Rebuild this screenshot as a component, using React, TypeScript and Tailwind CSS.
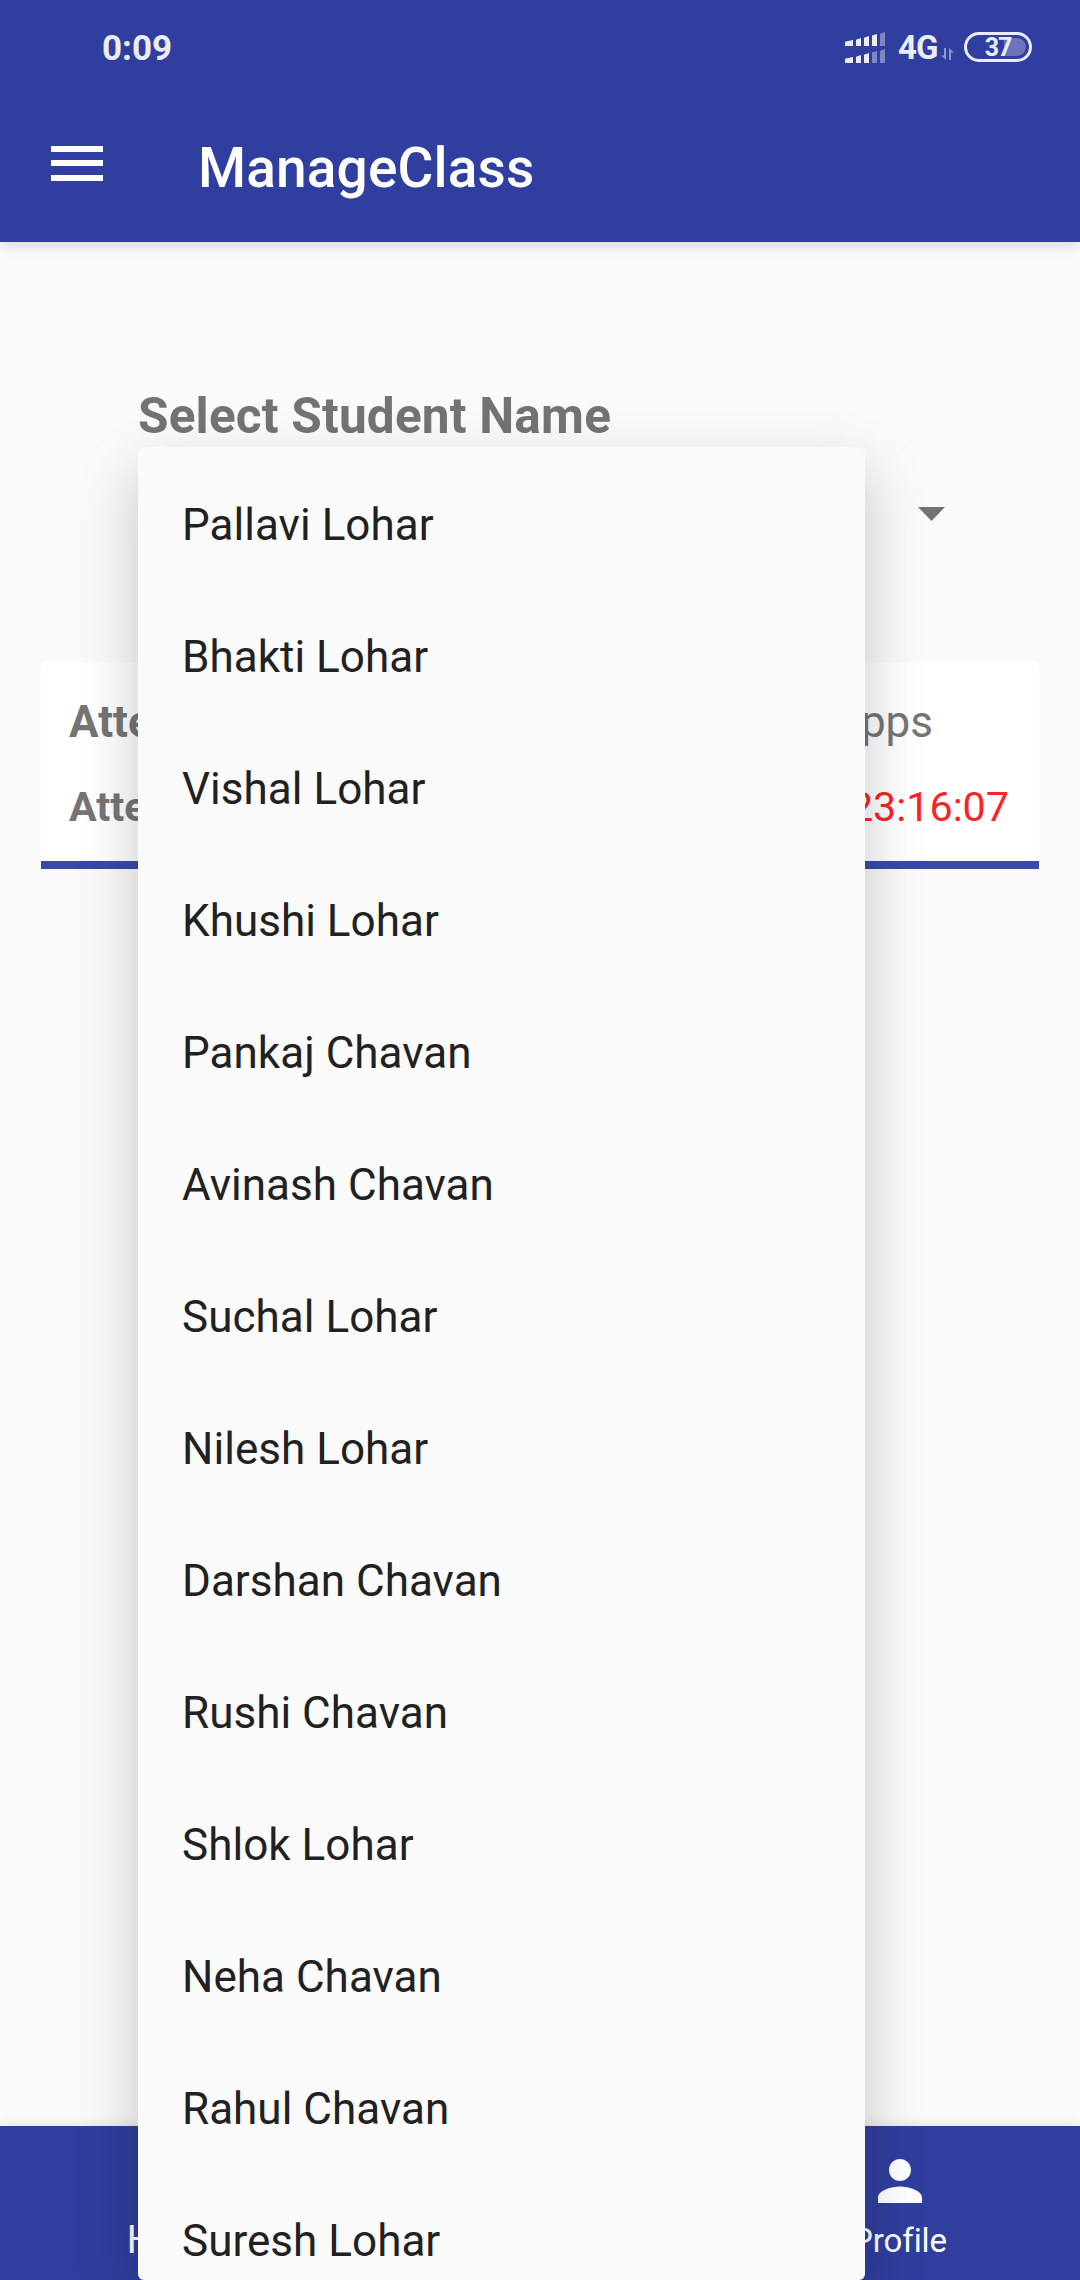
import { MdPerson, MdHome, MdAssignment } from "react-icons/md";

const students = [
  "Pallavi Lohar",
  "Bhakti Lohar",
  "Vishal Lohar",
  "Khushi Lohar",
  "Pankaj Chavan",
  "Avinash Chavan",
  "Suchal Lohar",
  "Nilesh Lohar",
  "Darshan Chavan",
  "Rushi Chavan",
  "Shlok Lohar",
  "Neha Chavan",
  "Rahul Chavan",
  "Suresh Lohar",
];

function SignalBars() {
  return (
    <svg className="h-[31px] w-[40px]" viewBox="0 0 40 31" fill="#ebecf7">
      <path d="M0 10.5 Q0 9.8 .8 9.6 L8 8 V14 H0Z" />
      <path d="M11 7.8 L16 6 V14 H11Z" />
      <path d="M19 5.8 L24 4 V14 H19Z" />
      <path d="M27 3.6 L32 2 V14 H27Z" />
      <path d="M35 2 L40 0 V14 H35Z" opacity=".42" />
      <path d="M0 27.5 Q0 26.8 .8 26.6 L8 25 V31 H0Z" />
      <path d="M11 24.8 L16 23 V31 H11Z" />
      <path d="M19 22.8 L24 21 V31 H19Z" />
      <path d="M27 20.6 L32 19 V31 H27Z" opacity=".42" />
      <path d="M35 19 L40 17 V31 H35Z" opacity=".42" />
    </svg>
  );
}

function StatusBar() {
  return (
    <div className="flex h-[94px] items-center justify-between pr-[48px] pl-[102px] text-[#ebecf7]">
      <span className="pt-[3px] text-[35px] leading-[41px] font-bold">0:09</span>
      <div className="flex items-center">
        <SignalBars />
        <span className="ml-[13px] w-[40px] pt-[2px] text-[33px] leading-[38px] font-bold tracking-[-0.9px]">4G</span>
        <svg className="mt-[14px] ml-[3px] h-[12px] w-[13px]" viewBox="0 0 13 12" fill="#8f96cb">
          <path d="M3 0H5V12L0 7.5H3Z" />
          <path d="M8 12H10V4.5H13L8 0Z" />
        </svg>
        <div className="relative ml-[10px] flex h-[30px] w-[68px] items-center justify-center rounded-full border-[3px] border-[#ebecf7]">
          <div className="absolute top-[3px] right-[3px] h-[18px] w-[22px] rounded-r-full bg-[#6b74ba]" />
          <span className="relative pt-[1px] text-[25px] leading-[24px] font-bold tracking-[-1px]">37</span>
        </div>
      </div>
    </div>
  );
}

function StudentMenu() {
  return (
    <ul className="absolute top-[447px] left-[138px] h-[1833px] w-[727px] rounded-[6px] bg-[#fafafa] pt-[12px] shadow-[0_24px_60px_rgba(0,0,0,0.22)]">
      {students.slice(0, 13).map((name) => (
        <li key={name} className="flex h-[132px] items-center px-[44px] text-[44px] leading-[52px] tracking-[0.03px] text-[#212121]">
          {name}
        </li>
      ))}
      <li className="flex h-[105px] items-start px-[44px] pt-[40px] text-[44px] leading-[52px] tracking-[0.03px] text-[#212121]">
        {students[13]}
      </li>
    </ul>
  );
}

export default function App() {
  return (
    <div className="relative flex h-[2280px] w-[1080px] flex-col overflow-hidden bg-[#fafafa] font-[Roboto,sans-serif]">
      <header className="h-[242px] shrink-0 bg-[#303f9f] shadow-[0_4px_12px_rgba(0,0,0,0.13)]">
        <StatusBar />
        <div className="flex h-[148px] items-center pl-[51px]">
          <div className="mb-[10px] flex w-[52px] flex-col gap-[8.5px]">
            <div className="h-[6px] bg-white" />
            <div className="h-[6px] bg-white" />
            <div className="h-[6px] bg-white" />
          </div>
          <h1 className="ml-[95px] text-[55px] leading-[64px] font-medium tracking-[0.15px] text-white">ManageClass</h1>
        </div>
      </header>

      <main className="flex flex-1 flex-col">
        <h2 className="mt-[145px] ml-[138px] text-[49.5px] leading-[58px] font-bold tracking-[0.2px] text-[#737373]">
          Select Student Name
        </h2>
        <div className="mt-[62px] mr-[135.5px] flex h-[14px] justify-end">
          <svg className="h-[14px] w-[27px]" viewBox="0 0 27 14" fill="#737373">
            <path d="M0 0H27L13.5 14Z" />
          </svg>
        </div>
        <section className="mx-[41px] mt-[141px] border-b-[8px] border-[#3949ab]">
          <div className="flex h-[199px] flex-col rounded-[6px] bg-white pt-[34px] pl-[28px]">
            <div className="flex justify-between pr-[106px] text-[44px] leading-[52px] text-[#757575]">
              <span className="font-bold">Atte</span>
              <span>Apps</span>
            </div>
            <div className="mt-[35px] flex justify-between pr-[30px] text-[41.25px] leading-[48px]">
              <span className="font-bold text-[#757575]">Atte</span>
              <span className="text-[#fb2323]">23:16:07</span>
            </div>
          </div>
        </section>
      </main>

      <nav className="grid h-[154px] shrink-0 grid-cols-3 bg-[#303f9f] text-white shadow-[0_0_12px_rgba(0,0,0,0.12)]">
        <div className="flex flex-col items-center pt-[22px]">
          <MdHome className="size-[66px]" />
          <span className="mt-[3px] mr-[3px] text-[38.5px] leading-[45px]">Home</span>
        </div>
        <div className="flex flex-col items-center pt-[22px]">
          <MdAssignment className="size-[66px]" />
        </div>
        <div className="flex flex-col items-center pt-[22px]">
          <MdPerson className="size-[66px]" />
          <span className="mt-[7px] mr-[1px] text-[33px] leading-[39px] tracking-[-0.1px]">Profile</span>
        </div>
      </nav>

      <StudentMenu />
    </div>
  );
}
